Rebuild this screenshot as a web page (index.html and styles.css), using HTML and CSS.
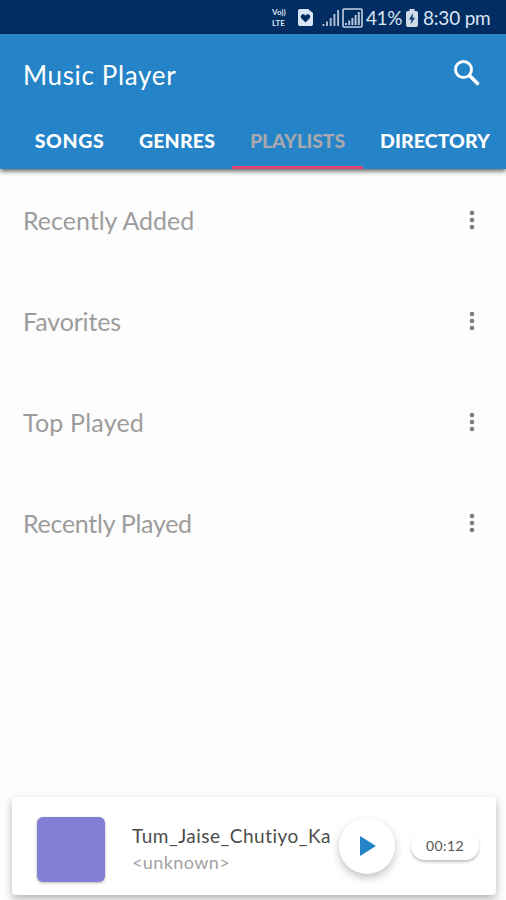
FILE: index.html
```html
<!DOCTYPE html>
<html lang="en">
<head>
<meta charset="utf-8">
<title>Music Player</title>
<link rel="stylesheet" href="styles.css">
</head>
<body>
<div class="app">
  <div class="status">
    <div class="volte"><span>Vo))</span><span>LTE</span></div>
    <svg class="card-icon" width="15" height="17" viewBox="0 0 15 17"><path d="M2 0H10L15 4V15Q15 17 13 17H2Q0 17 0 15V2Q0 0 2 0Z" fill="#dbe6f5"/><path d="M7.500 13.500L3.300 9.200C1.300 6.300 5.500 3.700 7.500 6.700C9.500 3.700 13.700 6.300 11.700 9.200Z" fill="#022d62"/></svg>
    <svg class="signal" width="18" height="18" viewBox="0 0 18 18"><path d="M1.500 15V17M5 12.500V17M8.700 9V17M12.400 5V17M16.100 1V17" stroke="#a9bad3" stroke-width="2"/></svg>
    <svg class="signal-box" width="21" height="20" viewBox="0 0 21 20"><rect x="1" y="1" width="19" height="18" rx="1" fill="none" stroke="#c3d0e3" stroke-width="1.600"/><path d="M4 15V17M7.200 12.500V17M10.400 10V17M13.600 7V17M16.800 4V17" stroke="#b4c4da" stroke-width="2"/></svg>
    <span class="percent">41%</span>
    <svg class="battery" width="12" height="18" viewBox="0 0 12 18"><path d="M3.500 0H8.500V2H10Q12 2 12 4V16Q12 18 10 18H2Q0 18 0 16V4Q0 2 2 2H3.500Z" fill="#d0dbea"/><path d="M7 4L3 10.500H5.500L4.500 15.500L9 8.800H6.500Z" fill="#123b70"/></svg>
    <span class="clock">8:30 pm</span>
  </div>
  <header class="header">
    <div class="toolbar">
      <h1 class="title">Music Player</h1>
      <svg class="search" width="26" height="26" viewBox="0 0 26 26" fill="none" stroke="#fff"><circle cx="9.500" cy="9.500" r="8" stroke-width="2.900"/><path d="M15.300 15.300L24.500 24.500" stroke-width="3.600"/></svg>
    </div>
    <nav class="tabs">
      <div class="tab songs"><span>SONGS</span></div>
      <div class="tab genres"><span>GENRES</span></div>
      <div class="tab playlists"><span>PLAYLISTS</span></div>
      <div class="tab directory"><span>DIRECTORY</span></div>
    </nav>
  </header>
  <main class="list">
    <div class="row"><span class="added">Recently Added</span><svg width="6" height="20" viewBox="0 0 6 20"><circle cx="3" cy="3" r="2.300"/><circle cx="3" cy="10" r="2.300"/><circle cx="3" cy="17" r="2.300"/></svg></div>
    <div class="row"><span class="favorites">Favorites</span><svg width="6" height="20" viewBox="0 0 6 20"><circle cx="3" cy="3" r="2.300"/><circle cx="3" cy="10" r="2.300"/><circle cx="3" cy="17" r="2.300"/></svg></div>
    <div class="row"><span class="top">Top Played</span><svg width="6" height="20" viewBox="0 0 6 20"><circle cx="3" cy="3" r="2.300"/><circle cx="3" cy="10" r="2.300"/><circle cx="3" cy="17" r="2.300"/></svg></div>
    <div class="row"><span class="played">Recently Played</span><svg width="6" height="20" viewBox="0 0 6 20"><circle cx="3" cy="3" r="2.300"/><circle cx="3" cy="10" r="2.300"/><circle cx="3" cy="17" r="2.300"/></svg></div>
  </main>
  <section class="player">
    <div class="cover"></div>
    <div class="track">
      <div class="song">Tum_Jaise_Chutiyo_Ka</div>
      <div class="artist">&lt;unknown&gt;</div>
    </div>
    <div class="play"><svg width="16" height="20" viewBox="0 0 16 20"><path d="M0 0L16 10L0 20Z" fill="#2484c8"/></svg></div>
    <div class="time">00:12</div>
  </section>
</div>
</body>
</html>
```
FILE: styles.css
```css
* { box-sizing: border-box; }
body { margin: 0; background: #fdfdfd; font-family: Lato, "Liberation Sans", sans-serif; font-variant-ligatures: none; }
.app { width: 506px; height: 900px; display: flex; flex-direction: column; overflow: hidden; white-space: nowrap; }
.status { flex: none; height: 34px; background: #022d62; color: #dbe4f2; display: flex; align-items: center; padding: 1px 0 0 272px; font-size: 19px; }
.volte { width: 17px; display: flex; flex-direction: column; gap: 1px; font-size: 8px; line-height: 10px; font-weight: 700; }
.card-icon { margin-left: 9px; }
.signal { margin-left: 9px; }
.signal-box { margin-left: 2px; }
.percent { width: 36px; margin-left: 3px; letter-spacing: -.4px; }
.battery { margin-left: 4px; }
.clock { margin-left: 5px; letter-spacing: -.2px; }
.header { flex: none; height: 135px; background: #2583c7; color: #fff; display: flex; flex-direction: column; box-shadow: 0 2px 5px rgba(0,0,0,.65); }
.toolbar { height: 80px; padding: 2px 26px 0 23px; display: flex; align-items: center; justify-content: space-between; }
.title { margin: 0; font-size: 26px; line-height: 32px; font-weight: 400; letter-spacing: .65px; }
.search { margin-top: -4px; }
.tabs { height: 55px; padding-left: 17px; display: flex; font-size: 19.5px; font-weight: 900; }
.tab { flex: none; display: flex; align-items: center; justify-content: center; border-bottom: 3px solid transparent; }
.songs { width: 105px; letter-spacing: .6px; }
.genres { width: 110px; letter-spacing: .2px; }
.playlists { width: 131px; color: #a5a8ae; border-color: #dd4671; letter-spacing: -.2px; }
.directory { width: 144px; letter-spacing: .1px; }
.list { flex: none; height: 628px; color: #9c9c9c; }
.row { height: 101.2px; padding: 0 31px 0 23px; display: flex; align-items: center; justify-content: space-between; font-size: 25px; }
.top { letter-spacing: .2px; }
.favorites { letter-spacing: -.15px; }
.played { letter-spacing: -.28px; }
.row svg { fill: #7c7c7c; }
.player { flex: none; height: 98px; margin: 0 10px 0 12px; background: #fff; border-radius: 4px; box-shadow: 0 4px 8px rgba(0,0,0,.28); padding-left: 25px; display: flex; align-items: center; }
.cover { width: 68px; height: 65px; margin-top: 6px; border-radius: 6px; background: #827fd5; box-shadow: 0 1px 3px rgba(0,0,0,.3); }
.track { width: 202px; margin: 6px 0 0 27px; overflow: hidden; }
.song { color: #4c4c4c; font-size: 19px; line-height: 26px; letter-spacing: .5px; }
.artist { color: #a2a2a2; font-size: 18px; line-height: 26px; letter-spacing: .4px; }
.play { width: 56px; height: 56px; margin-left: 5px; border-radius: 50%; background: #fff; box-shadow: 0 4px 9px rgba(0,0,0,.24); display: flex; align-items: center; justify-content: center; padding-left: 2px; }
.time { width: 68px; height: 28px; margin-left: 16px; border-radius: 14px; box-shadow: 0 2px 3px rgba(0,0,0,.25); color: #555; font-size: 14px; line-height: 28px; text-align: center; letter-spacing: .4px; }
```
